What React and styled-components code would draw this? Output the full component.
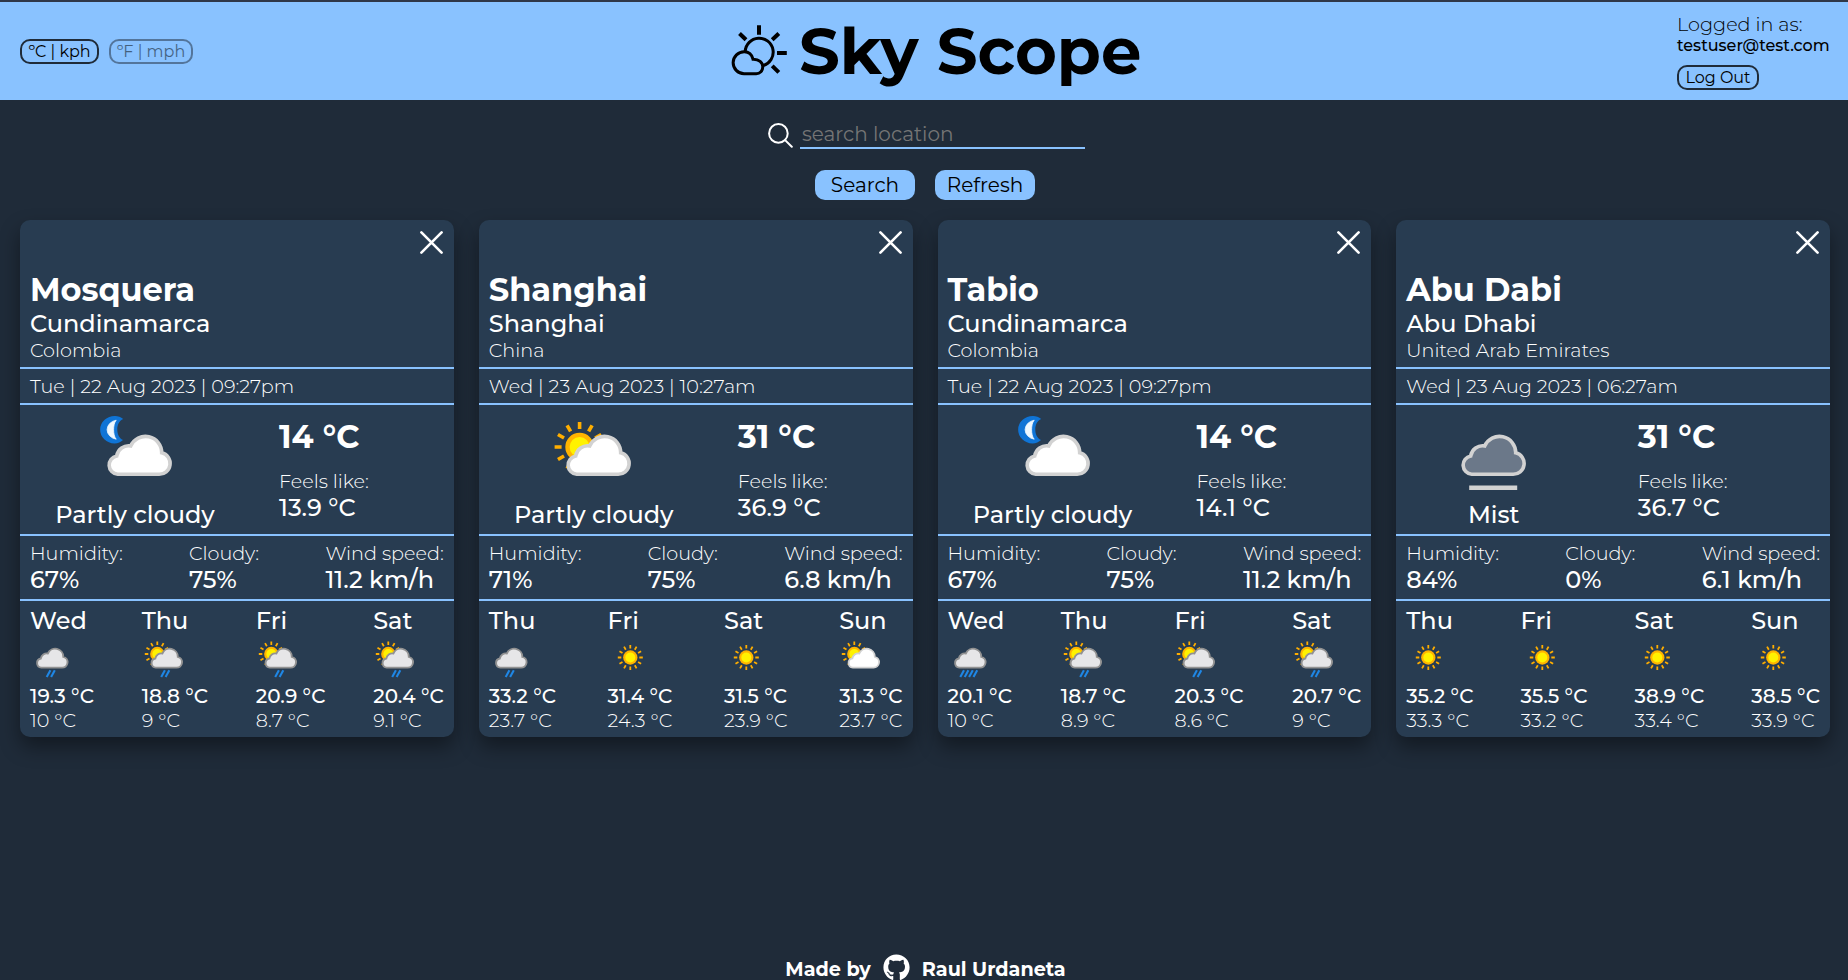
import React from "react";
import styled, { createGlobalStyle, css } from "styled-components";
import { FaGithub } from "react-icons/fa";

const GlobalStyle = createGlobalStyle`
  *, *::before, *::after { box-sizing: border-box; }
  body {
    margin: 0;
    background: #1f2b39;
    color: #fff;
    font-family: Montserrat, Inter, "Open Sans", sans-serif;
    font-weight: 300;
    overflow: hidden;
  }
  button, input { font: inherit; color: inherit; }
  p, h1, h2 { margin: 0; }
`;

const sky = "#89c2ff";
const ink = "#1f2b39";

const Page = styled.div`
  display: flex;
  flex-direction: column;
  height: 980px;
  overflow: hidden;
  border-top: 2px solid #2f3748;
`;

const Header = styled.header`
  display: grid;
  grid-template-columns: 1fr auto 1fr;
  align-items: center;
  flex: none;
  height: 98px;
  padding: 0 18px 0 20px;
  background: ${sky};
  color: #000;
`;

const UnitSwitch = styled.div`
  display: flex;
  gap: 10px;
`;

const OutlineButton = styled.button`
  display: block;
  width: ${(p) => p.$width}px;
  height: 25px;
  padding: 0;
  border: 2px solid ${ink};
  border-radius: 10px;
  background: none;
  color: #000;
  font-size: 16px;
  font-weight: 400;
  line-height: 21px;
  white-space: nowrap;
  opacity: ${(p) => (p.$muted ? 0.5 : 1)};
`;

const Brand = styled.div`
  display: flex;
  align-items: center;
  gap: 9px;
  margin-left: 21px;
`;

const Title = styled.h1`
  width: 342px;
  font-size: 64px;
  font-weight: 700;
  line-height: 78px;
  white-space: nowrap;
`;

const Account = styled.div`
  justify-self: end;
  width: 153px;
  white-space: nowrap;
`;

const AccountLabel = styled.p`
  font-size: 19.2px;
  line-height: 24px;
`;

const AccountEmail = styled.p`
  margin-bottom: 10px;
  font-size: 16px;
  font-weight: 500;
  line-height: 19px;
`;

const SearchForm = styled.form`
  display: flex;
  flex-direction: column;
  align-items: center;
  flex: none;
  height: 120px;
  padding: 19px 0 0 2px;
`;

const SearchField = styled.label`
  display: flex;
  align-items: center;
  gap: 7px;
  margin-left: 3px;
  svg { margin-top: 2px; }
`;

const SearchInput = styled.input`
  width: 285px;
  height: 30px;
  padding: 1px 2px 0;
  border: 0;
  border-bottom: 2px solid ${sky};
  outline: 0;
  background: none;
  font-size: 20px;
  font-weight: 400;
  &::placeholder { color: #757575; opacity: 1; }
`;

const SearchActions = styled.div`
  display: flex;
  gap: 20px;
  margin-top: 21px;
`;

const SolidButton = styled.button`
  width: 100px;
  height: 30px;
  padding: 0;
  border: 0;
  border-radius: 10px;
  background: ${sky};
  color: #000;
  font-size: 20px;
  font-weight: 400;
`;

const CardGrid = styled.main`
  display: grid;
  grid-template-columns: repeat(4, 1fr);
  gap: 25px;
  flex: none;
  width: 1850px;
  padding: 0 20px;
`;

const Card = styled.article`
  height: 517px;
  border-radius: 10px;
  background: #283c51;
  box-shadow: 0 10px 20px rgba(0, 0, 0, 0.4);
`;

const section = css`
  border-bottom: 2px solid ${sky};
`;

const Place = styled.header`
  ${section}
  height: 149px;
  padding: 0 10px;
`;

const CloseButton = styled.button`
  display: block;
  margin: 0 0 0 auto;
  padding: 11px 1px 16px;
  border: 0;
  background: none;
  line-height: 0;
`;

const City = styled.h2`
  font-size: 32px;
  font-weight: 700;
  line-height: 39px;
`;

const Value = styled.p`
  font-size: 24px;
  font-weight: 500;
  line-height: ${(p) => p.$line || 29}px;
  white-space: nowrap;
`;

const Label = styled.p`
  font-size: 19.2px;
  line-height: 24px;
  white-space: nowrap;
`;

const DateRow = styled.div`
  ${section}
  height: 36px;
  padding: 5px 10px 0;
`;

const Current = styled.section`
  ${section}
  display: grid;
  grid-template-columns: ${(p) => p.$columns};
  height: 131px;
`;

const Condition = styled.div`
  display: flex;
  flex-direction: column;
  align-items: center;
  padding-top: 4px;
`;

const Readings = styled.div`
  grid-column: 3;
  padding-top: 12px;
`;

const Temperature = styled(City)`
  margin-bottom: 13px;
`;

const Stats = styled.section`
  ${section}
  display: flex;
  justify-content: space-between;
  height: 65px;
  padding: 5px 10px 0;
`;

const Forecast = styled.section`
  display: flex;
  justify-content: space-between;
  padding: 5px 10px 0;
`;

const Day = styled.div`
  white-space: nowrap;
`;

const DayIcon = styled.div`
  height: 49px;
  line-height: 0;
`;

const High = styled.p`
  font-size: 20px;
  font-weight: 500;
  line-height: 24px;
`;

const Footer = styled.footer`
  display: flex;
  align-items: center;
  justify-content: center;
  gap: 12px;
  flex: none;
  height: 32px;
  margin-top: 216px;
  padding-left: 3px;
  font-size: 19.2px;
  font-weight: 700;
`;

const GithubMark = styled(FaGithub)`
  margin-bottom: 4px;
`;

function LogoIcon() {
  return (
    <svg width="60" height="58" viewBox="0 0 60 58" fill="none" stroke="#000" strokeWidth="3">
      <path d="M15.2 29.5A14 14 0 1 1 33.2 43.6" />
      <path d="M14 51.7A10.9 10.9 0 0 1 14.3 29.7C19 29.7 22 33 23 37.2C29 37 32.8 40.8 32.8 44.8C32.8 48.7 30 51.7 26.2 51.7Z" />
      <path strokeWidth="4" d="M29 3.3V12.8M9.5 11.5L16 17.8M48.8 11.5L42.2 17.8M47 31H56.8M42.2 43.8L48.8 50.4" />
    </svg>
  );
}

function SearchIcon() {
  return (
    <svg width="25" height="25" viewBox="0 0 25 25" fill="none" stroke="#fff" strokeWidth="2" strokeLinecap="round">
      <circle cx="10.4" cy="10.4" r="9.3" />
      <path d="M17.1 17.1L23.8 23.8" />
    </svg>
  );
}

function CloseIcon() {
  return (
    <svg width="23" height="23" viewBox="0 0 23 23" fill="none" stroke="#fff" strokeWidth="2.6" strokeLinecap="round">
      <path d="M1.4 1.4L21.6 21.6M21.6 1.4L1.4 21.6" />
    </svg>
  );
}

const cloudPath =
  "M23.5 65.3A9.3 9.3 0 0 1 22.5 46.9A12 12 0 0 1 36.5 37A16.2 16.2 0 0 1 67.5 43.8A10.9 10.9 0 0 1 64.5 65.3Z";

const rays = (from, to) =>
  Array.from({ length: 12 }, (_, i) => {
    const a = (i * Math.PI) / 6;
    const [s, c] = [Math.sin(a), Math.cos(a)];
    return `M${s * from} ${-c * from}L${s * to} ${-c * to}`;
  }).join("");

function Sun({ x, y }) {
  return (
    <g transform={`translate(${x} ${y})`}>
      <path d={rays(18, 25)} stroke="#ffae00" strokeWidth="3.6" />
      <circle r="14.3" fill="#ffb400" />
      <circle r="10" fill="#fff200" />
    </g>
  );
}

function Moon() {
  return (
    <>
      <path
        d="M33.2 10C31 8 28 7 25 7A14.6 13.7 0 0 0 24.5 34.4C28 34.4 31 33 33 31C29 29 27.3 25 27.3 20.5C27.3 16 29 12 33.2 10Z"
        fill="#0f74d6"
      />
      <path
        d="M26.2 11.2A11.4 9.7 0 0 0 26.2 30.2C24.2 28 23.6 24 23.6 20.6C23.6 17.5 24.2 13.5 26.2 11.2Z"
        fill="#eef8ff"
        stroke="#eef8ff"
        strokeWidth="0.8"
      />
    </>
  );
}

function WeatherIcon({ kind, size }) {
  const [scene, drops = 0] = kind.split(":");
  const wet = Number(drops);
  const shift = scene === "day" || scene === "night" ? 4.2 : -0.8;
  return (
    <svg width={size} height={size} viewBox="0 0 90 90">
      {scene === "sun" && <Sun x={44.6} y={45} />}
      {scene === "day" && <Sun x={30.6} y={38} />}
      {scene === "night" && <Moon />}
      {scene !== "sun" && (
        <g transform={`translate(${shift} 0)`}>
          <path
            d={cloudPath}
            fill={scene === "mist" ? "#6b7889" : wet ? "#e6e6e8" : "#fff"}
            stroke={wet ? "#929292" : "#d2d2d2"}
            strokeWidth={wet ? 3.8 : 3.6}
          />
          {scene === "mist" && <path d="M21 78.8H69" stroke="#d2d2d2" strokeWidth="4.4" />}
          {Array.from({ length: wet }, (_, i) => {
            const x = 43 - wet * 4.4 + i * 8.8;
            return <path key={i} d={`M${x} 84L${x + 7.4} 70.6`} stroke="#1f87e5" strokeWidth="4.2" />;
          })}
        </g>
      )}
    </svg>
  );
}

const cards = [
  {
    city: "Mosquera", region: "Cundinamarca", country: "Colombia",
    date: "Tue | 22 Aug 2023 | 09:27pm",
    icon: "night", condition: "Partly cloudy", temp: "14 °C", feels: "13.9 °C",
    humidity: "67%", cloudy: "75%", wind: "11.2 km/h",
    current: "230px 29px 1fr",
    days: [
      ["Wed", "cloud:2", "19.3 °C", "10 °C"],
      ["Thu", "day:2", "18.8 °C", "9 °C"],
      ["Fri", "day:2", "20.9 °C", "8.7 °C"],
      ["Sat", "day:2", "20.4 °C", "9.1 °C"],
    ],
  },
  {
    city: "Shanghai", region: "Shanghai", country: "China",
    date: "Wed | 23 Aug 2023 | 10:27am",
    icon: "day", condition: "Partly cloudy", temp: "31 °C", feels: "36.9 °C",
    humidity: "71%", cloudy: "75%", wind: "6.8 km/h",
    current: "230px 29px 1fr",
    days: [
      ["Thu", "cloud:2", "33.2 °C", "23.7 °C"],
      ["Fri", "sun", "31.4 °C", "24.3 °C"],
      ["Sat", "sun", "31.5 °C", "23.9 °C"],
      ["Sun", "day", "31.3 °C", "23.7 °C"],
    ],
  },
  {
    city: "Tabio", region: "Cundinamarca", country: "Colombia",
    date: "Tue | 22 Aug 2023 | 09:27pm",
    icon: "night", condition: "Partly cloudy", temp: "14 °C", feels: "14.1 °C",
    humidity: "67%", cloudy: "75%", wind: "11.2 km/h",
    current: "230px 29px 1fr",
    days: [
      ["Wed", "cloud:4", "20.1 °C", "10 °C"],
      ["Thu", "day:2", "18.7 °C", "8.9 °C"],
      ["Fri", "day:2", "20.3 °C", "8.6 °C"],
      ["Sat", "day:2", "20.7 °C", "9 °C"],
    ],
  },
  {
    city: "Abu Dabi", region: "Abu Dhabi", country: "United Arab Emirates",
    date: "Wed | 23 Aug 2023 | 06:27am",
    icon: "mist", condition: "Mist", temp: "31 °C", feels: "36.7 °C",
    humidity: "84%", cloudy: "0%", wind: "6.1 km/h",
    current: "195px 46.5px 1fr",
    days: [
      ["Thu", "sun", "35.2 °C", "33.3 °C"],
      ["Fri", "sun", "35.5 °C", "33.2 °C"],
      ["Sat", "sun", "38.9 °C", "33.4 °C"],
      ["Sun", "sun", "38.5 °C", "33.9 °C"],
    ],
  },
];

function Stat({ label, value }) {
  return (
    <div>
      <Label>{label}</Label>
      <Value>{value}</Value>
    </div>
  );
}

function WeatherCard({ data }) {
  return (
    <Card>
      <Place>
        <CloseButton aria-label="Remove"><CloseIcon /></CloseButton>
        <City>{data.city}</City>
        <Value>{data.region}</Value>
        <Label>{data.country}</Label>
      </Place>
      <DateRow><Label>{data.date}</Label></DateRow>
      <Current $columns={data.current}>
        <Condition>
          <WeatherIcon kind={data.icon} size={90} />
          <Value $line={31}>{data.condition}</Value>
        </Condition>
        <Readings>
          <Temperature as="p">{data.temp}</Temperature>
          <Label>Feels like:</Label>
          <Value>{data.feels}</Value>
        </Readings>
      </Current>
      <Stats>
        <Stat label="Humidity:" value={data.humidity} />
        <Stat label="Cloudy:" value={data.cloudy} />
        <Stat label="Wind speed:" value={data.wind} />
      </Stats>
      <Forecast>
        {data.days.map(([name, icon, high, low]) => (
          <Day key={name}>
            <Value>{name}</Value>
            <DayIcon><WeatherIcon kind={icon} size={45} /></DayIcon>
            <High>{high}</High>
            <Label>{low}</Label>
          </Day>
        ))}
      </Forecast>
    </Card>
  );
}

export default function App() {
  return (
    <>
      <GlobalStyle />
      <Page>
        <Header>
          <UnitSwitch>
            <OutlineButton $width={79}>ºC | kph</OutlineButton>
            <OutlineButton $width={84} $muted>ºF | mph</OutlineButton>
          </UnitSwitch>
          <Brand>
            <LogoIcon />
            <Title>Sky Scope</Title>
          </Brand>
          <Account>
            <AccountLabel>Logged in as:</AccountLabel>
            <AccountEmail>testuser@test.com</AccountEmail>
            <OutlineButton $width={82}>Log Out</OutlineButton>
          </Account>
        </Header>
        <SearchForm onSubmit={(e) => e.preventDefault()}>
          <SearchField>
            <SearchIcon />
            <SearchInput placeholder="search location" />
          </SearchField>
          <SearchActions>
            <SolidButton type="submit">Search</SolidButton>
            <SolidButton type="button">Refresh</SolidButton>
          </SearchActions>
        </SearchForm>
        <CardGrid>
          {cards.map((card) => <WeatherCard key={card.city} data={card} />)}
        </CardGrid>
        <Footer>
          <span>Made by</span>
          <GithubMark size={27} />
          <span>Raul Urdaneta</span>
        </Footer>
      </Page>
    </>
  );
}
